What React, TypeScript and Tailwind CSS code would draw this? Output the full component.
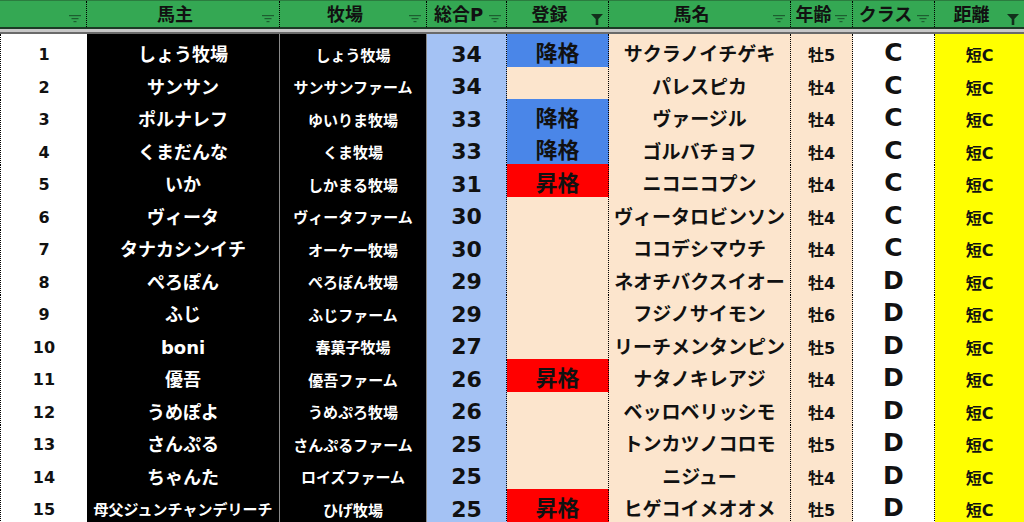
import React from 'react'

type Row = {
  no: number
  owner: string
  farm: string
  pts: number
  reg: '' | '降格' | '昇格'
  horse: string
  age: string
  cls: string
  dist: string
  dotted?: boolean
}

const rows: Row[] = [
  { no: 1, owner: 'しょう牧場', farm: 'しょう牧場', pts: 34, reg: '降格', horse: 'サクラノイチゲキ', age: '牡5', cls: 'C', dist: '短C', dotted: true },
  { no: 2, owner: 'サンサン', farm: 'サンサンファーム', pts: 34, reg: '', horse: 'パレスピカ', age: '牡4', cls: 'C', dist: '短C' },
  { no: 3, owner: 'ポルナレフ', farm: 'ゆいりま牧場', pts: 33, reg: '降格', horse: 'ヴァージル', age: '牡4', cls: 'C', dist: '短C' },
  { no: 4, owner: 'くまだんな', farm: 'くま牧場', pts: 33, reg: '降格', horse: 'ゴルバチョフ', age: '牡4', cls: 'C', dist: '短C' },
  { no: 5, owner: 'いか', farm: 'しかまる牧場', pts: 31, reg: '昇格', horse: 'ニコニコプン', age: '牡4', cls: 'C', dist: '短C' },
  { no: 6, owner: 'ヴィータ', farm: 'ヴィータファーム', pts: 30, reg: '', horse: 'ヴィータロビンソン', age: '牡4', cls: 'C', dist: '短C', dotted: true },
  { no: 7, owner: 'タナカシンイチ', farm: 'オーケー牧場', pts: 30, reg: '', horse: 'ココデシマウチ', age: '牡4', cls: 'C', dist: '短C' },
  { no: 8, owner: 'ぺろぽん', farm: 'ぺろぽん牧場', pts: 29, reg: '', horse: 'ネオチバクスイオー', age: '牡4', cls: 'D', dist: '短C', dotted: true },
  { no: 9, owner: 'ふじ', farm: 'ふじファーム', pts: 29, reg: '', horse: 'フジノサイモン', age: '牡6', cls: 'D', dist: '短C' },
  { no: 10, owner: 'boni', farm: '春菓子牧場', pts: 27, reg: '', horse: 'リーチメンタンピン', age: '牡5', cls: 'D', dist: '短C' },
  { no: 11, owner: '優吾', farm: '優吾ファーム', pts: 26, reg: '昇格', horse: 'ナタノキレアジ', age: '牡4', cls: 'D', dist: '短C' },
  { no: 12, owner: 'うめぽよ', farm: 'うめぷろ牧場', pts: 26, reg: '', horse: 'ベッロベリッシモ', age: '牡4', cls: 'D', dist: '短C', dotted: true },
  { no: 13, owner: 'さんぷる', farm: 'さんぷるファーム', pts: 25, reg: '', horse: 'トンカツノコロモ', age: '牡5', cls: 'D', dist: '短C', dotted: true },
  { no: 14, owner: 'ちゃんた', farm: 'ロイズファーム', pts: 25, reg: '', horse: 'ニジュー', age: '牡4', cls: 'D', dist: '短C', dotted: true },
  { no: 15, owner: '母父ジュンチャンデリーチ', farm: 'ひげ牧場', pts: 25, reg: '昇格', horse: 'ヒゲコイメオオメ', age: '牡5', cls: 'D', dist: '短C' },
]

const cols = 'grid grid-cols-[87px_193px_147px_80px_102px_182px_62px_82px_89px]'

function FilterLines() {
  return (
    <svg width="12" height="8" viewBox="0 0 12 8" className="shrink-0">
      <rect x="0" y="0" width="12" height="1.2" fill="#1d5e30" />
      <rect x="2.5" y="3" width="7" height="1.2" fill="#1d5e30" />
      <rect x="4.5" y="6" width="3" height="1.2" fill="#1d5e30" />
    </svg>
  )
}

function FilterSolid() {
  return (
    <svg width="12" height="11" viewBox="0 0 12 11" className="shrink-0">
      <path d="M0 0 H12 L7.3 5 V11 H4.7 V5 Z" fill="#12301b" />
    </svg>
  )
}

function Head({ label, solid, last }: { label: string; solid?: boolean; last?: boolean }) {
  return (
    <div className={`relative flex items-center justify-center pr-[16px] ${last ? '' : 'border-r border-dotted border-black'}`}>
      <span className="text-[18px] font-bold text-[#111] leading-none pt-[2px]">{label}</span>
      <span className={`absolute right-[5px] ${solid ? 'top-[13px]' : 'top-[14px]'}`}>
        {solid ? <FilterSolid /> : <FilterLines />}
      </span>
    </div>
  )
}

export default function App() {
  return (
    <div className="w-[1024px] h-[522px] overflow-hidden bg-white font-['DejaVu_Sans','Noto_Sans_CJK_JP',sans-serif] font-bold">
      <div className={`${cols} h-[29px] bg-[#34a853] border-t border-[#2b7c3f] border-b-2 border-b-[#1c3a25]`}>
        <Head label="" />
        <Head label="馬主" />
        <Head label="牧場" />
        <Head label="総合P" />
        <Head label="登録" solid />
        <Head label="馬名" />
        <Head label="年齢" />
        <Head label="クラス" />
        <Head label="距離" solid last />
      </div>
      <div className="h-[3px] bg-[#c7c7c7]" />
      <div className="h-[2px] bg-[#6a6a6a]" />

      {rows.map((r, i) => {
        const last = i === rows.length - 1
        const regBg = r.reg === '降格' ? 'bg-[#4a86e8]' : r.reg === '昇格' ? 'bg-[#ff0000]' : 'bg-[#fce5cd]'
        return (
          <div key={r.no} className={`${cols} ${last ? 'h-[30px] border-b-[3px] border-[#1e6b34]' : 'h-[32.5px]'}`}>
            <div className="flex items-center justify-center pt-[3px] bg-white border-l border-dotted border-l-black border-b-2 border-b-[#e4e4e4] text-[16px] text-[#111]">
              {r.no}
            </div>
            <div className={`flex items-center justify-center pt-[2px] bg-black text-white border-r border-r-[#8a8a8a] border-b-2 border-b-[#666] ${r.owner.length > 10 ? 'text-[15px]' : 'text-[18px]'}`}>
              {r.owner}
            </div>
            <div className="flex items-center justify-center pt-[4px] bg-black text-white text-[15px] border-r border-r-[#8a8a8a] border-b-2 border-b-[#666]">
              {r.farm}
            </div>
            <div className={`flex items-center justify-center bg-[#a4c2f4] text-[22px] text-[#111] border-r border-dotted border-r-black ${r.dotted ? 'border-b border-dashed border-b-[#333]' : 'border-b border-b-[#8fa3c4]'}`}>
              {r.pts}
            </div>
            <div className={`flex items-center justify-center pb-[2px] ${regBg} text-[22px] text-[#111] border-r border-dotted border-r-black border-b border-b-[#222]`}>
              {r.reg}
            </div>
            <div className="flex items-center justify-center bg-[#fce5cd] text-[19px] text-[#111] border-r border-dotted border-r-black border-b border-b-[#222]">
              {r.horse}
            </div>
            <div className="flex items-center justify-center pt-[4px] bg-[#fce5cd] text-[16px] text-[#111] border-r border-dotted border-r-black border-b border-b-[#222]">
              {r.age}
            </div>
            <div className="flex items-center justify-center pb-[3px] bg-white text-[25px] text-[#111] border-r border-dotted border-r-black border-b border-b-[#e0e0e0]">
              {r.cls}
            </div>
            <div className="flex items-center justify-center pt-[4px] bg-[#ffff00] text-[16px] text-[#111] border-b border-dotted border-b-[#222]">
              {r.dist}
            </div>
          </div>
        )
      })}
    </div>
  )
}
